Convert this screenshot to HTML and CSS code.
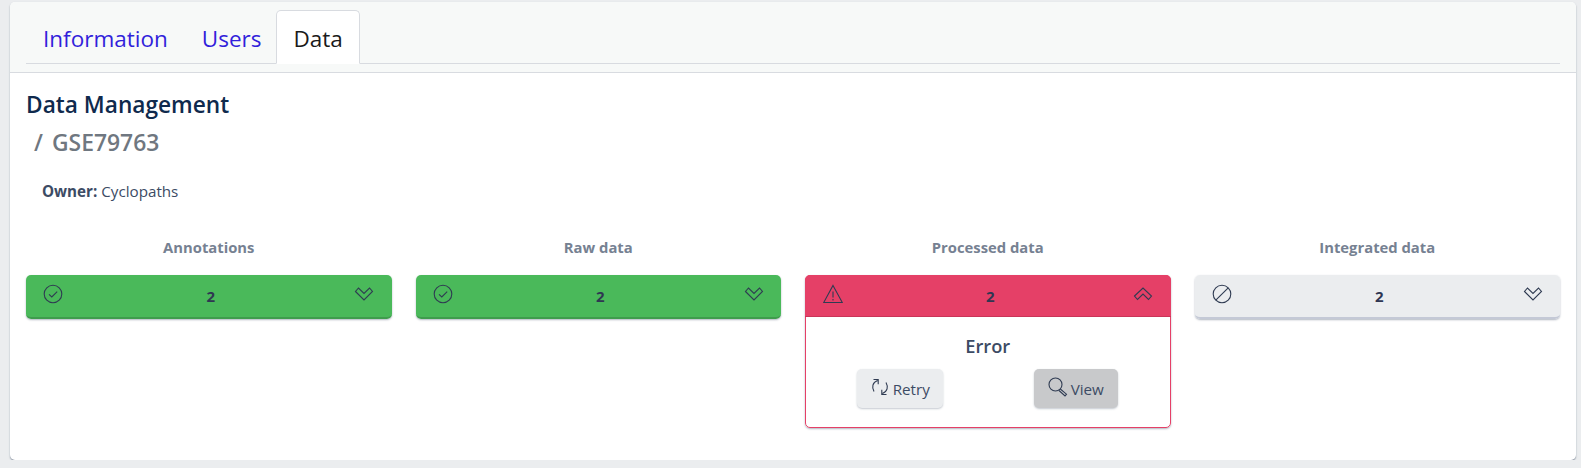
FILE: index.html
```html
<!DOCTYPE html>
<html lang="en">
<head>
    <meta charset="UTF-8">
    <meta name="viewport" content="width=device-width, initial-scale=1.0">
    <title>Data Management</title>
    <link rel="stylesheet" href="styles.css">
</head>
<body>
    <div class="card">
        <div class="card-header">
            <ul class="tabs">
                <li><a class="tab" href="#">Information</a></li>
                <li><a class="tab" href="#">Users</a></li>
                <li><a class="tab active" href="#">Data</a></li>
            </ul>
        </div>

        <div class="card-body">
            <h4 class="page-title">Data Management</h4>
            <h4 class="page-sub"><span class="slash">/</span>GSE79763</h4>
            <p class="owner"><strong>Owner:</strong> Cyclopaths</p>

            <div class="stages">
                <!-- Annotations -->
                <div class="stage">
                    <div class="stage-title">Annotations</div>
                    <div class="panel panel-success">
                        <div class="panel-bar">
                            <svg class="icon" viewBox="0 0 20 20"><circle cx="10" cy="10" r="8.8"/><path d="M6 10.3l2.8 2.7L14.2 7.6"/></svg>
                            <span class="count">2</span>
                            <svg class="icon chevron" viewBox="0 0 20 20"><path d="M1.5 8.500L10 17L18.500 8.500L15.500 5L10 10.500L4.500 5Z"/></svg>
                        </div>
                    </div>
                </div>

                <!-- Raw data -->
                <div class="stage">
                    <div class="stage-title">Raw data</div>
                    <div class="panel panel-success">
                        <div class="panel-bar">
                            <svg class="icon" viewBox="0 0 20 20"><circle cx="10" cy="10" r="8.8"/><path d="M6 10.3l2.8 2.7L14.2 7.6"/></svg>
                            <span class="count">2</span>
                            <svg class="icon chevron" viewBox="0 0 20 20"><path d="M1.5 8.500L10 17L18.500 8.500L15.500 5L10 10.500L4.500 5Z"/></svg>
                        </div>
                    </div>
                </div>

                <!-- Processed data -->
                <div class="stage">
                    <div class="stage-title">Processed data</div>
                    <div class="panel panel-danger">
                        <div class="panel-bar">
                            <svg class="icon" viewBox="0 0 20 20"><path d="M10 1.5L19.3 18.5H.7Z"/><path d="M10 7.5v6M10 15v1.5"/></svg>
                            <span class="count">2</span>
                            <svg class="icon chevron" viewBox="0 0 20 20"><path d="M1.500 13L10 5L18.500 13L15.500 16.500L10 11L4.500 16.500Z"/></svg>
                        </div>
                        <div class="panel-body">
                            <div class="panel-msg">Error</div>
                            <div class="panel-actions">
                                <button class="btn btn-light">
                                    <svg class="btn-icon" viewBox="0 0 20 20"><path d="M7.500 3.500C2.500 5.500 1.500 10 4 14.500M3.500 2.500h4.700v4.700M12.500 16.500c5-2 6-6.500 3.500-11M16.500 17.500h-4.700v-4.700"/></svg>
                                    Retry
                                </button>
                                <button class="btn btn-grey">
                                    <svg class="btn-icon" viewBox="0 0 20 20"><circle cx="7.500" cy="7.500" r="6.500"/><path d="M12.300 12l6.200 5.200-1.500 1.800-6-5.500"/></svg>
                                    View
                                </button>
                            </div>
                        </div>
                    </div>
                </div>

                <!-- Integrated data -->
                <div class="stage">
                    <div class="stage-title">Integrated data</div>
                    <div class="panel panel-none">
                        <div class="panel-bar">
                            <svg class="icon" viewBox="0 0 20 20"><circle cx="10" cy="10" r="8.800"/><path d="M3.800 16.200L16.200 3.800"/></svg>
                            <span class="count">2</span>
                            <svg class="icon chevron" viewBox="0 0 20 20"><path d="M1.500 8.500L10 17L18.500 8.500L15.500 5L10 10.500L4.500 5Z"/></svg>
                        </div>
                    </div>
                </div>
            </div>
        </div>
    </div>
</body>
</html>
```

FILE: styles.css
```css
body {
    font-family: 'Open Sans', 'Noto Sans', sans-serif;
    background: #ebedef;
    color: #3c4b64;
    margin: 0;
    padding: 2px 5px 0 10px;
}

.card {
    background: #fff;
    border-radius: 5px;
    height: 458px;
    box-sizing: border-box;
    box-shadow: 0 1px 1px rgba(60, 75, 100, 0.4), 0 1px 2px rgba(60, 75, 100, 0.25);
    overflow: hidden;
}

.card-header {
    background: #f7f9f8;
    border-bottom: 1px solid #d8dbe0;
    height: 71px;
    box-sizing: border-box;
    padding: 8px 16px 0;
}

.tabs {
    display: flex;
    list-style: none;
    margin: 0;
    padding: 0;
    height: 54px;
    box-sizing: border-box;
    border-bottom: 1px solid #d8dbe0;
}

.tab {
    display: block;
    height: 54px;
    box-sizing: border-box;
    padding: 12px 16px 0;
    border: 1px solid transparent;
    border-radius: 5px 5px 0 0;
    font-size: 22.5px;
    line-height: 32px;
    color: #321fdb;
    text-decoration: none;
}

.tab.active {
    background: #fff;
    border-color: #d8dbe0 #d8dbe0 #fff;
    color: #1a1a1a;
    margin-left: -2px;
}

.card-body {
    padding: 18px 16px 0;
}

.page-title {
    margin: 0;
    font-size: 22.7px;
    line-height: 28px;
    font-weight: 600;
    color: #0f2a4d;
}

.page-sub {
    margin: 9px 0 0 8px;
    font-size: 22.9px;
    line-height: 30px;
    font-weight: 600;
    color: #6f7780;
}

.slash {
    margin-right: 9px;
}

.owner {
    margin: 23px 0 0 16px;
    font-size: 15.2px;
    line-height: 21px;
}

.stages {
    display: grid;
    grid-template-columns: repeat(4, 1fr);
    column-gap: 24px;
    margin-top: 35px;
}

.stage-title {
    text-align: center;
    font-size: 14.8px;
    font-weight: 700;
    line-height: 21px;
    color: #768192;
    margin-bottom: 17px;
}

.panel {
    border-radius: 5px;
    box-shadow: 0 1px 2px rgba(60, 75, 100, 0.4);
}

.panel-bar {
    display: flex;
    justify-content: space-between;
    align-items: flex-start;
    height: 44px;
    box-sizing: border-box;
    padding: 9px 17px 0;
    border-radius: 5px 5px 0 0;
}

.panel-success .panel-bar {
    background: #4ab95a;
    border-bottom: 2px solid #3f9c4d;
    border-radius: 5px;
}

.panel-none .panel-bar {
    background: #ebedef;
    border-bottom: 2px solid #c4c9d6;
    border-radius: 5px;
}

.panel-danger {
    border: 1px solid #e54067;
}

.panel-danger .panel-bar {
    background: #e54067;
    border-bottom: 1px solid #c93558;
    height: 42px;
    margin: -1px -1px 0;
    padding-left: 18px;
}

.icon {
    width: 20px;
    height: 20px;
    fill: none;
    stroke: #2f3b52;
    stroke-width: 1.1;
}

.chevron {
    margin-top: -1px;
}

.count {
    font-size: 15px;
    font-weight: 700;
    line-height: 21px;
    color: #2f3652;
    margin: 2px 0 0 4px;
}

.panel-body {
    padding: 17px 5px 19px;
    text-align: center;
}

.panel-msg {
    font-size: 18.3px;
    font-weight: 600;
    line-height: 24px;
    margin-bottom: 11px;
}

.panel-actions {
    display: grid;
    grid-template-columns: 176px 176px;
    justify-content: center;
    justify-items: center;
}

.btn {
    display: flex;
    align-items: center;
    gap: 3px;
    height: 39px;
    padding: 0 13px;
    border: 0;
    border-radius: 5px;
    font-family: inherit;
    font-size: 15.2px;
    color: #3c4b64;
    box-shadow: 0 1px 2px rgba(60, 75, 100, 0.3);
}

.btn-light {
    background: #ebedef;
}

.btn-grey {
    background: #c8c9cb;
    padding: 0 14px;
}

.btn-icon {
    width: 20px;
    height: 20px;
    fill: none;
    stroke: #2f3b52;
    stroke-width: 1.1;
    margin-top: -4px;
}
```
